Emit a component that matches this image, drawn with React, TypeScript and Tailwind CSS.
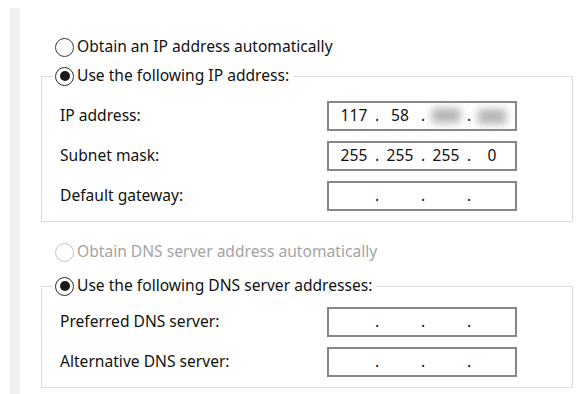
function Radio({ checked, disabled }: { checked?: boolean; disabled?: boolean }) {
  return (
    <span
      className={
        checked
          ? "w-[19px] h-[19px] shrink-0 rounded-full border-[1.5px] border-[#2b2b2b] bg-white flex items-center justify-center"
          : disabled
          ? "w-[19px] h-[19px] shrink-0 rounded-full border border-[#c4c4c4] bg-white"
          : "w-[19px] h-[19px] shrink-0 rounded-full border border-[#3a3a3a] bg-white"
      }
    >
      {checked && <span className="w-[10px] h-[10px] rounded-full bg-[#1a1a1a]" />}
    </span>
  );
}

function Blur() {
  return <span className="inline-block w-[28px] h-[15px] bg-[#b3b3b3] blur-[4px]" />;
}

function IpBox({ parts }: { parts?: (string | null)[] }) {
  const segs = parts ?? ["", "", "", ""];
  return (
    <div className="w-[190px] h-[30px] border-2 border-[#878787] bg-white flex items-center pl-[6px]">
      {segs.map((s, i) => (
        <div key={i} className="flex items-center">
          <span className="w-[38px] h-[22px] flex items-center justify-center">
            {s === null ? <Blur /> : s}
          </span>
          {i < 3 && <span className="w-[8px] text-center">.</span>}
        </div>
      ))}
    </div>
  );
}

function Row({ label, parts }: { label: string; parts?: (string | null)[] }) {
  return (
    <div className="flex items-center h-[30px]">
      <span className="w-[267px]">{label}</span>
      <IpBox parts={parts} />
    </div>
  );
}

function Group({
  legend,
  children,
  top,
}: {
  legend: string;
  children: React.ReactNode;
  top: string;
}) {
  return (
    <fieldset className="w-[532px] border border-[#dcdcdc]">
      <legend className="ml-[11px] pl-[2px] pr-[4px] h-5 flex items-center gap-[3px]">
        <Radio checked />
        <span>{legend}</span>
      </legend>
      <div className={`pl-[18px] pb-[10px] flex flex-col gap-[10px] ${top}`}>{children}</div>
    </fieldset>
  );
}

export default function App() {
  return (
    <div className="w-[584px] h-[394px] bg-white flex overflow-hidden font-['Noto_Sans',sans-serif] text-[15.6px] text-[#111]">
      <div className="w-[10px]" />
      <div className="w-[10px] mt-2 bg-[#f0f0f0]" />
      <div className="pl-[21px] pt-[37px] flex flex-col">
        <div className="ml-[14px] h-5 flex items-center gap-[3px]">
          <Radio />
          <span>Obtain an IP address automatically</span>
        </div>
        <div className="mt-[9px]">
          <Group legend="Use the following IP address:" top="pt-[15px]">
            <Row label="IP address:" parts={["117", "58", null, null]} />
            <Row label="Subnet mask:" parts={["255", "255", "255", "0"]} />
            <Row label="Default gateway:" />
          </Group>
        </div>
        <div className="ml-[14px] mt-[20px] h-5 flex items-center gap-[3px] text-[#a3a3a3]">
          <Radio disabled />
          <span>Obtain DNS server address automatically</span>
        </div>
        <div className="mt-[14px]">
          <Group legend="Use the following DNS server addresses:" top="pt-[11px]">
            <Row label="Preferred DNS server:" />
            <Row label="Alternative DNS server:" />
          </Group>
        </div>
      </div>
    </div>
  );
}
